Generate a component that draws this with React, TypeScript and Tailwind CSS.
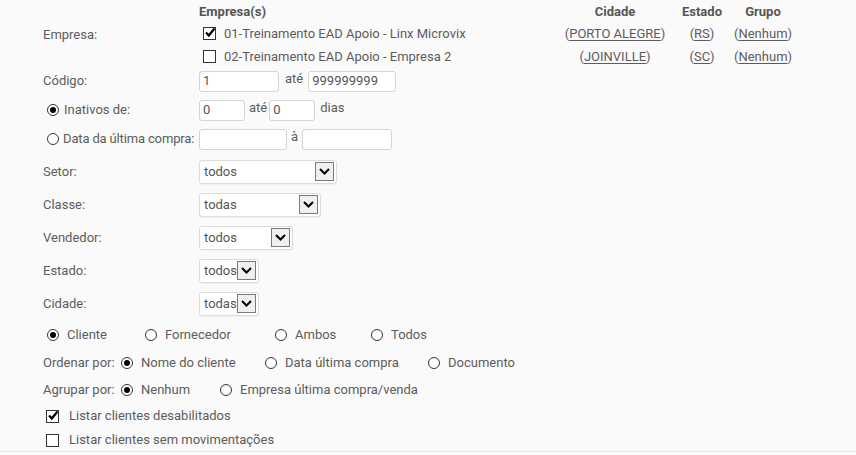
import React from 'react';

const font = { fontFamily: 'Roboto, "Liberation Sans", sans-serif' };

const Check = ({ checked }: { checked?: boolean }) => (
  <span className="relative inline-flex w-[13px] h-[13px] border border-[#333] bg-white shrink-0 items-center justify-center">
    {checked && (
      <svg width="12" height="11" viewBox="0 0 12 11" className="absolute -top-[1px] left-[0px]">
        <path d="M2 5.5 L4.8 8.5 L10.5 1.5" fill="none" stroke="#000" strokeWidth="2.2" />
      </svg>
    )}
  </span>
);

const Radio = ({ checked }: { checked?: boolean }) => (
  <span className="inline-flex w-[12px] h-[12px] rounded-full border border-[#333] bg-white shrink-0 items-center justify-center">
    {checked && <span className="w-[6px] h-[6px] rounded-full bg-black" />}
  </span>
);

const Input = ({ w, value }: { w: string; value?: string }) => (
  <div className={`${w} h-[21px] shrink-0 border border-[#d4d4d4] rounded-[3px] bg-white px-[3px] flex items-center text-[13px] text-[#555]`}>
    {value}
  </div>
);

const Select = ({ w, value }: { w: string; value: string }) => (
  <div className={`${w} h-[24px] border border-[#dcdcdc] rounded-[3px] bg-white flex items-center justify-between pl-[4px] pr-[2px] shadow-[0_1px_1px_rgba(0,0,0,0.04)]`}>
    <span className="text-[13px] text-[#555]">{value}</span>
    <span className="w-[19px] h-[19px] border border-[#7a7a7a] bg-[#f0f0f0] flex items-center justify-center">
      <svg width="11" height="7" viewBox="0 0 11 7">
        <path d="M1 1 L5.5 5.5 L10 1" fill="none" stroke="#000" strokeWidth="2" />
      </svg>
    </span>
  </div>
);

const Link = ({ t }: { t: string }) => (
  <span>
    (<span className="underline underline-offset-2">{t}</span>)
  </span>
);

export default function App() {
  return (
    <div className="w-[856px] h-[455px] bg-[#fafafa] text-[13px] text-[#5c5c5c] overflow-hidden" style={font}>
      <div className="pl-[43px] pt-[2px]">
        {/* Empresa */}
        <div className="flex">
          <div className="w-[156px] shrink-0 flex items-center">Empresa:</div>
          <div className="flex flex-col">
            <div className="flex h-[20px] items-center font-bold text-[#555]">
              <div className="w-[361px]">Empresa(s)</div>
              <div className="w-[110px] text-center">Cidade</div>
              <div className="w-[64px] text-center">Estado</div>
              <div className="w-[58px] text-center">Grupo</div>
            </div>
            <div className="flex h-[23px] items-center">
              <div className="w-[361px] flex items-center gap-[8px] pl-[4px]">
                <Check checked />
                <span>01-Treinamento EAD Apoio - Linx Microvix</span>
              </div>
              <div className="w-[110px] text-center"><Link t="PORTO ALEGRE" /></div>
              <div className="w-[64px] text-center"><Link t="RS" /></div>
              <div className="w-[58px] text-center"><Link t="Nenhum" /></div>
            </div>
            <div className="flex h-[23px] items-center">
              <div className="w-[361px] flex items-center gap-[8px] pl-[4px]">
                <Check />
                <span>02-Treinamento EAD Apoio - Empresa 2</span>
              </div>
              <div className="w-[110px] text-center"><Link t="JOINVILLE" /></div>
              <div className="w-[64px] text-center"><Link t="SC" /></div>
              <div className="w-[58px] text-center"><Link t="Nenhum" /></div>
            </div>
          </div>
        </div>

        {/* Código */}
        <div className="flex h-[26px] items-center">
          <div className="w-[156px] shrink-0">Código:</div>
          <Input w="w-[80px]" value="1" />
          <span className="ml-[6px] mr-[5px] -mt-[4px]">até</span>
          <Input w="w-[88px]" value="999999999" />
        </div>

        {/* Inativos */}
        <div className="flex h-[32px] items-center">
          <div className="w-[156px] shrink-0 flex items-center gap-[5px] pl-[4px]">
            <Radio checked />
            <span>Inativos de:</span>
          </div>
          <Input w="w-[46px]" value="0" />
          <span className="ml-[4px] mr-[2px] -mt-[4px]">até</span>
          <Input w="w-[46px]" value="0" />
          <span className="ml-[5px] -mt-[4px]">dias</span>
        </div>

        {/* Data */}
        <div className="flex h-[26px] items-center">
          <div className="w-[156px] shrink-0 flex items-center gap-[4px] pl-[4px] whitespace-nowrap tracking-[-0.15px]">
            <Radio />
            <span>Data da última compra:</span>
          </div>
          <Input w="w-[88px]" />
          <span className="ml-[4px] mr-[4px] -mt-[4px]">à</span>
          <Input w="w-[90px]" />
        </div>

        <div className="h-[3px]" />

        {[
          ['Setor:', 'w-[138px]', 'todos'],
          ['Classe:', 'w-[122px]', 'todas'],
          ['Vendedor:', 'w-[94px]', 'todos'],
          ['Estado:', 'w-[60px]', 'todos'],
          ['Cidade:', 'w-[60px]', 'todas'],
        ].map(([l, w, v]) => (
          <div key={l} className="flex h-[33px] items-center">
            <div className="w-[156px] shrink-0">{l}</div>
            <Select w={w} value={v} />
          </div>
        ))}

        {/* Tipo */}
        <div className="flex h-[30px] items-center pl-[4px]">
          <div className="w-[98px] flex items-center gap-[8px]"><Radio checked /><span>Cliente</span></div>
          <div className="w-[130px] flex items-center gap-[8px]"><Radio /><span>Fornecedor</span></div>
          <div className="w-[96px] flex items-center gap-[8px]"><Radio /><span>Ambos</span></div>
          <div className="flex items-center gap-[8px]"><Radio /><span>Todos</span></div>
        </div>

        {/* Ordenar */}
        <div className="flex h-[26px] items-center">
          <div className="w-[78px]">Ordenar por:</div>
          <div className="w-[144px] flex items-center gap-[8px]"><Radio checked /><span>Nome do cliente</span></div>
          <div className="w-[163px] flex items-center gap-[8px]"><Radio /><span>Data última compra</span></div>
          <div className="flex items-center gap-[8px]"><Radio /><span>Documento</span></div>
        </div>

        {/* Agrupar */}
        <div className="flex h-[27px] items-center">
          <div className="w-[78px]">Agrupar por:</div>
          <div className="w-[99px] flex items-center gap-[8px]"><Radio checked /><span>Nenhum</span></div>
          <div className="flex items-center gap-[8px]"><Radio /><span>Empresa última compra/venda</span></div>
        </div>

        <div className="flex h-[26px] items-center gap-[10px] pl-[3px]">
          <Check checked />
          <span>Listar clientes desabilitados</span>
        </div>
        <div className="flex h-[22px] items-center gap-[10px] pl-[3px]">
          <Check />
          <span>Listar clientes sem movimentações</span>
        </div>
      </div>
      <div className="border-t border-[#e2e2e2]" />
    </div>
  );
}
